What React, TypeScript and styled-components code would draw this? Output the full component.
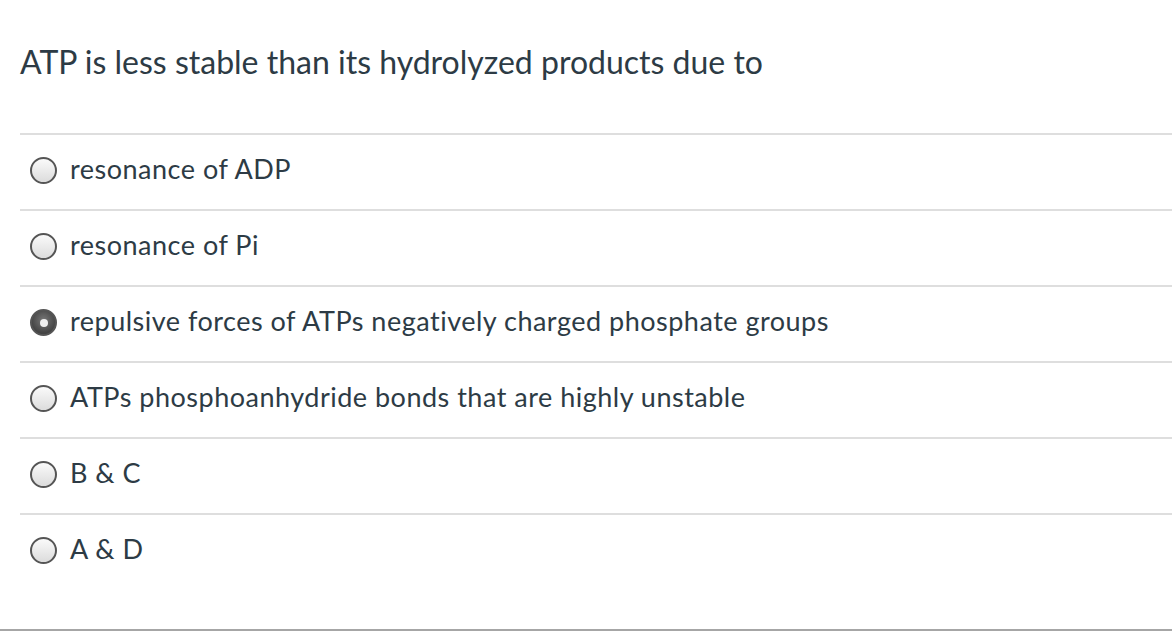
import React from "react";
import styled, { createGlobalStyle } from "styled-components";

const Global = createGlobalStyle`
  html, body { margin: 0; padding: 0; background: #fff; }
  body { font-family: Lato, "Open Sans", sans-serif; color: #2d3b45; }
`;

const Page = styled.div`
  width: 1172px;
  height: 635px;
  display: flex;
  flex-direction: column;
  box-sizing: border-box;
`;

const Title = styled.h1`
  margin: 0;
  padding: 43px 0 0 20px;
  height: 133px;
  flex: none;
  box-sizing: border-box;
  font-size: 32px;
  font-weight: 400;
  line-height: 38px;
`;

const List = styled.div`
  margin-left: 20px;
  display: flex;
  flex-direction: column;
`;

const Row = styled.label`
  height: 76px;
  box-sizing: border-box;
  border-top: 2px solid #dedede;
  display: flex;
  align-items: center;
  gap: 13px;
  padding: 0 0 3px 10px;
  font-size: 27px;
  letter-spacing: 0.5px;
`;

const Text = styled.span`
  padding-bottom: 4px;
`;

const Radio = styled.span<{ $checked?: boolean }>`
  width: 27px;
  height: 27px;
  box-sizing: border-box;
  border-radius: 50%;
  border: 2px solid #555;
  flex: none;
  display: flex;
  align-items: center;
  justify-content: center;
  background: ${(p) =>
    p.$checked
      ? "radial-gradient(circle at 50% 40%, #777 0%, #444 70%)"
      : "linear-gradient(#fafafa, #dcdcdc)"};
  &::after {
    content: "";
    display: ${(p) => (p.$checked ? "block" : "none")};
    width: 8px;
    height: 8px;
    border-radius: 50%;
    background: #eee;
  }
`;

const Spacer = styled.div`
  flex: 1;
`;

const Footer = styled.div`
  height: 2px;
  background: #a6a6a6;
  margin-bottom: 4px;
`;

const options = [
  "resonance of ADP",
  "resonance of Pi",
  "repulsive forces of ATPs negatively charged phosphate groups",
  "ATPs phosphoanhydride bonds that are highly unstable",
  "B & C",
  "A & D",
];

export default function App() {
  return (
    <Page>
      <Global />
      <Title>ATP is less stable than its hydrolyzed products due to</Title>
      <List>
        {options.map((o, i) => (
          <Row key={i}>
            <Radio $checked={i === 2} />
            <Text>{o}</Text>
          </Row>
        ))}
      </List>
      <Spacer />
      <Footer />
    </Page>
  );
}
